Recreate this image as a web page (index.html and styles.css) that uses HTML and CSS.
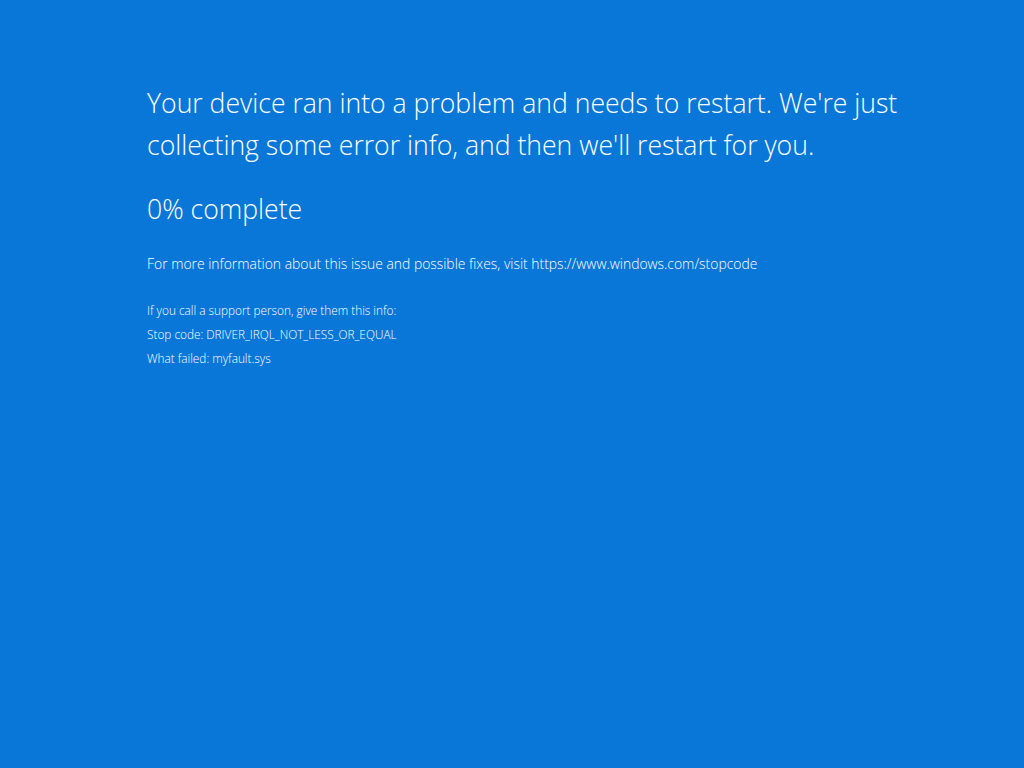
FILE: index.html
```html
<!DOCTYPE html>
<html lang="en">
<head>
    <meta charset="UTF-8">
    <title>Stop error</title>
    <link rel="stylesheet" href="styles.css">
</head>
<body>
    <div class="screen">
        <p class="message">Your device ran into a problem and needs to restart. We're just collecting some error info, and then we'll restart for you.</p>
        <p class="progress">0% complete</p>
        <p class="info">For more information about this issue and possible fixes, visit https://www.windows.com/stopcode</p>
        <div class="support">
            <p>If you call a support person, give them this info:</p>
            <p>Stop code: DRIVER_IRQL_NOT_LESS_OR_EQUAL</p>
            <p>What failed: myfault.sys</p>
        </div>
    </div>
</body>
</html>
```

FILE: styles.css
```css
html, body {
    margin: 0;
    height: 100%;
}

body {
    background-color: #0977d7;
    color: #ffffff;
    font-family: "Open Sans", "Noto Sans", "Liberation Sans", sans-serif;
    font-weight: 300;
}

.screen {
    padding: 82px 0 0 147px;
}

p {
    margin: 0;
}

.message {
    width: 780px;
    font-size: 26.6px;
    line-height: 42px;
}

.progress {
    margin-top: 22px;
    font-size: 26.6px;
    line-height: 42px;
}

.info {
    margin-top: 24px;
    font-size: 13.9px;
    line-height: 20px;
}

.support {
    margin-top: 24px;
    font-size: 11.8px;
    line-height: 24px;
}
```
